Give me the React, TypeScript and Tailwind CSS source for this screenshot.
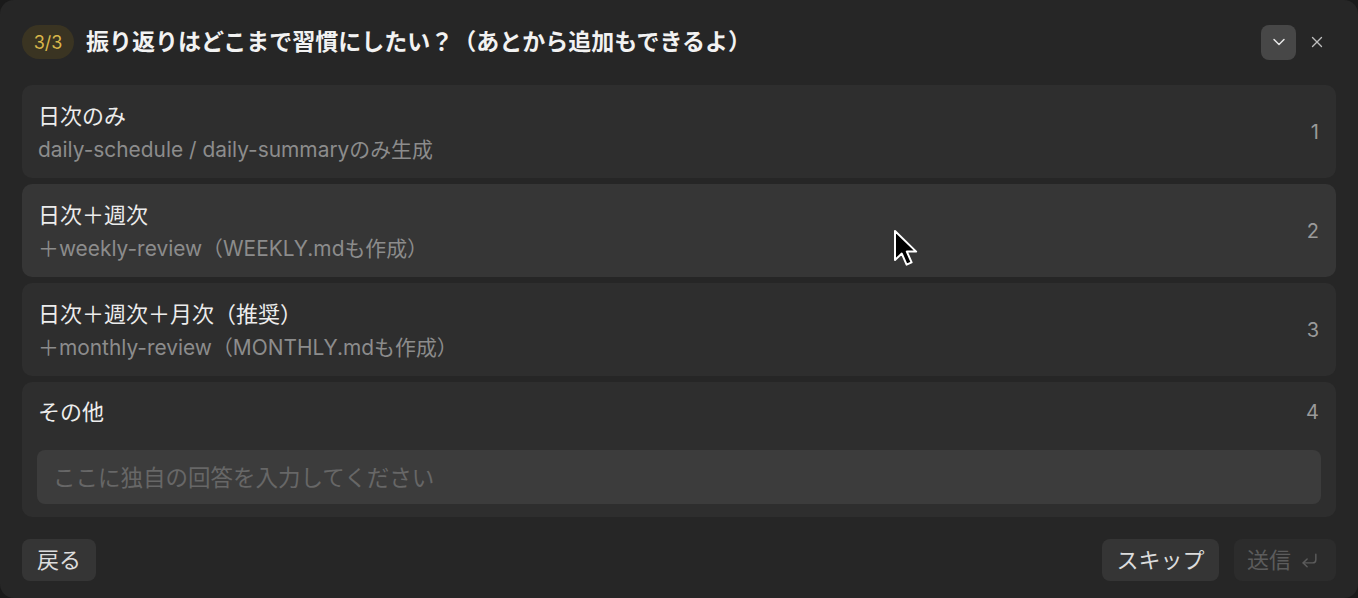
import { ChevronDown, X, CornerDownLeft } from "lucide-react";

const options = [
  { title: "日次のみ", desc: "daily-schedule / daily-summaryのみ生成", key: "1" },
  { title: "日次＋週次", desc: "＋weekly-review（WEEKLY.mdも作成）", key: "2", hover: true },
  { title: "日次＋週次＋月次（推奨）", desc: "＋monthly-review（MONTHLY.mdも作成）", key: "3" },
];

const Cursor = () => (
  <svg
    className="absolute left-[893px] top-[229px] pointer-events-none"
    width="26"
    height="38"
    viewBox="0 0 13 19"
  >
    <path
      d="M1 1 L1 15.5 L4.4 12.3 L6.8 17.8 L9.3 16.7 L6.9 11.3 L11.6 11.3 Z"
      fill="#000"
      stroke="#fff"
      strokeWidth="1"
      strokeLinejoin="round"
    />
  </svg>
);

const App = () => {
  return (
    <div
      className="w-[1358px] h-[598px] bg-[#1a1a1a] overflow-hidden"
      style={{ fontFamily: '"Inter", "Noto Sans CJK JP", sans-serif' }}
    >
      <div className="relative w-full h-full rounded-[14px] bg-[#262626] px-[22px] flex flex-col">
        {/* header */}
        <div className="flex items-center h-[85px] pb-[1px]">
          <div className="flex items-center justify-center h-[34px] w-[52px] rounded-full bg-[#3a3422] text-[#d8b64a] text-[18px]">
            3/3
          </div>
          <h1 className="ml-[12px] text-[23px] font-bold text-[#f2f2f2]">
            振り返りはどこまで習慣にしたい？（あとから追加もできるよ）
          </h1>
          <div className="ml-auto flex items-center mr-[7px]">
            <button className="w-[35px] h-[35px] rounded-[8px] bg-[#474747] flex items-center justify-center text-[#e6e6e6]">
              <ChevronDown size={20} strokeWidth={1.8} />
            </button>
            <button className="ml-[9px] w-[24px] h-[35px] flex items-center justify-center text-[#bdbdbd]">
              <X size={18} strokeWidth={1.8} />
            </button>
          </div>
        </div>

        {/* options */}
        <div className="flex flex-col gap-[6px]">
          {options.map((o) => (
            <div
              key={o.key}
              className={`flex h-[93px] rounded-[10px] pl-[16px] pr-[17px] pt-[15px] ${
                o.hover ? "bg-[#363636]" : "bg-[#2e2e2e]"
              }`}
            >
              <div className="flex flex-col">
                <div className="text-[22px] leading-[32px] text-[#ececec]">{o.title}</div>
                <div className="text-[20.9px] leading-[36px] text-[#8c8c8c]">{o.desc}</div>
              </div>
              <div className="ml-auto self-center -mt-[14px] text-[20px] text-[#9a9a9a]">{o.key}</div>
            </div>
          ))}
          <div className="rounded-[10px] bg-[#2e2e2e] pl-[15px] pr-[15px] pt-[14px] pb-[13px]">
            <div className="flex items-center h-[32px] pl-[1px] pr-[2px]">
              <div className="text-[22px] text-[#ececec]">その他</div>
              <div className="ml-auto text-[20px] text-[#9a9a9a]">4</div>
            </div>
            <input
              className="mt-[22px] w-full h-[54px] rounded-[8px] bg-[#3c3c3c] px-[16px] text-[22.5px] text-[#e0e0e0] placeholder:text-[#676767] outline-none"
              placeholder="ここに独自の回答を入力してください"
            />
          </div>
        </div>

        {/* footer */}
        <div className="flex items-center mt-[22px]">
          <button className="h-[42px] w-[74px] rounded-[8px] bg-[#353535] text-[22px] text-[#dcdcdc]">
            戻る
          </button>
          <div className="ml-auto flex items-center gap-[15px]">
            <button className="h-[42px] w-[117px] rounded-[8px] bg-[#353535] text-[22px] text-[#dcdcdc]">
              スキップ
            </button>
            <button className="h-[42px] w-[102px] pl-[13px] rounded-[8px] bg-[#2c2c2c] text-[22px] text-[#5c5c5c] flex items-center gap-[9px]">
              送信
              <CornerDownLeft size={19} strokeWidth={1.8} />
            </button>
          </div>
        </div>

        <Cursor />
      </div>
    </div>
  );
};

export default App;
